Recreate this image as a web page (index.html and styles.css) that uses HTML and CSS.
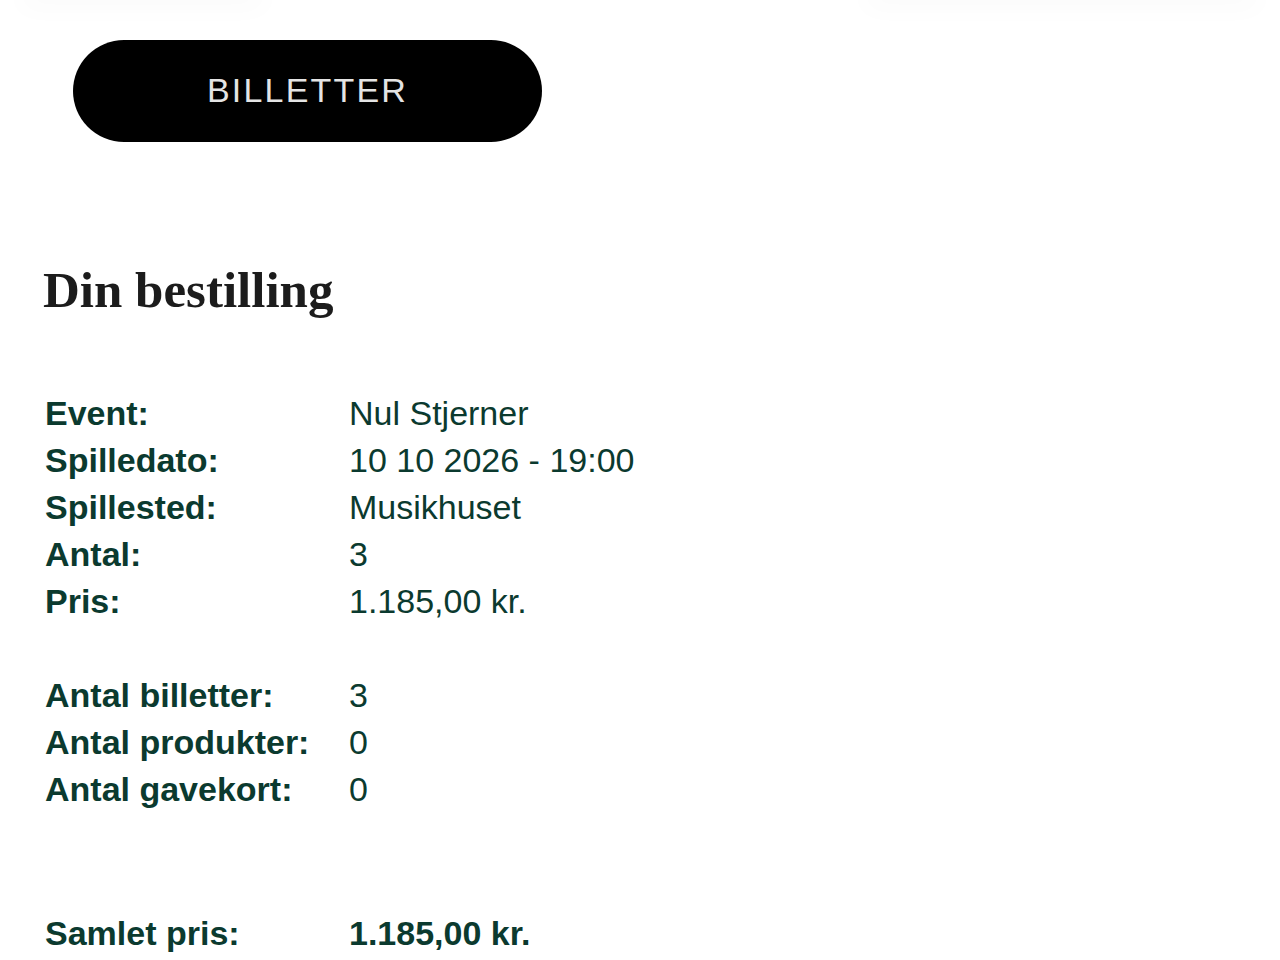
FILE: index.html
```html
<!DOCTYPE html>
<html lang="da">

<head>
    <meta charset="UTF-8">
    <meta name="viewport" content="width=device-width, initial-scale=1.0">
    <title>Din bestilling</title>
    <link rel="stylesheet" href="styles.css">
</head>

<body>
    <div class="topbar">
        <div class="topbar-left"></div>
        <div class="topbar-right"></div>
    </div>

    <div class="page">
        <div class="tabs">
            <button class="pill">BILLETTER</button>
        </div>

        <h1>Din bestilling</h1>

        <div class="order">
            <div class="label">Event:</div>
            <div class="value">Nul Stjerner</div>
            <div class="label">Spilledato:</div>
            <div class="value">10 10 2026 - 19:00</div>
            <div class="label">Spillested:</div>
            <div class="value">Musikhuset</div>
            <div class="label">Antal:</div>
            <div class="value">3</div>
            <div class="label">Pris:</div>
            <div class="value">1.185,00 kr.</div>

            <div class="spacer"></div>

            <div class="label">Antal billetter:</div>
            <div class="value">3</div>
            <div class="label">Antal produkter:</div>
            <div class="value">0</div>
            <div class="label">Antal gavekort:</div>
            <div class="value">0</div>

            <div class="spacer double"></div>

            <div class="label">Samlet pris:</div>
            <div class="value total">1.185,00 kr.</div>
        </div>
    </div>
</body>

</html>
```

FILE: styles.css
```css
body {
    margin: 0;
    background: #fff;
    font-family: "Liberation Sans", Arial, sans-serif;
}

.topbar {
    display: flex;
    justify-content: space-between;
    height: 0;
    padding: 0 18px;
}

.topbar-left,
.topbar-right {
    height: 24px;
    margin-top: -24px;
    border-radius: 12px;
    box-shadow: 0 10px 26px rgba(0, 0, 0, 0.018);
}

.topbar-left {
    width: 250px;
}

.topbar-right {
    width: 400px;
}

.page {
    padding: 40px 0 0 44px;
}

.tabs {
    padding-left: 29px;
}

.pill {
    width: 469px;
    height: 102px;
    padding-bottom: 2px;
    border: none;
    border-radius: 51px;
    background: #000;
    color: #e4e4e4;
    font-family: "Liberation Sans", Arial, sans-serif;
    font-size: 34px;
    letter-spacing: 2.2px;
    cursor: pointer;
}

h1 {
    margin: 118px 0 0 -1px;
    font-family: "Liberation Serif", "Times New Roman", serif;
    font-size: 51px;
    line-height: 60px;
    font-weight: bold;
    color: #1c1c1c;
}

.order {
    display: grid;
    grid-template-columns: 304px 1fr;
    margin: 70px 0 0 1px;
    font-size: 34px;
    line-height: 47px;
    color: #0b3a2f;
}

.label {
    font-weight: bold;
}

.spacer {
    grid-column: 1 / -1;
    height: 47px;
}

.spacer.double {
    height: 97px;
}

.total {
    font-weight: bold;
}
```
